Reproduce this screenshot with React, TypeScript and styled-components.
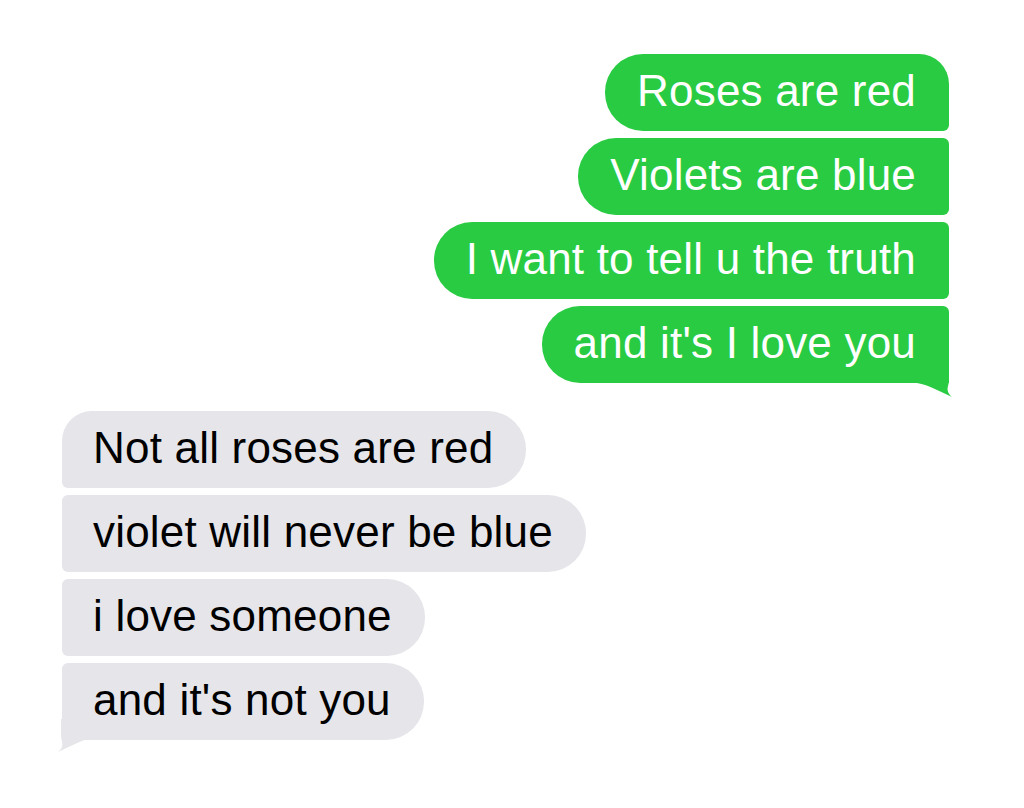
import styled, { createGlobalStyle, css } from 'styled-components'

const GlobalStyle = createGlobalStyle`
  html, body {
    margin: 0;
    padding: 0;
    background: #ffffff;
  }
  body {
    font-family: "Liberation Sans", Arial, Helvetica, sans-serif;
  }
`

type Side = 'sent' | 'received'
type Pos = 'first' | 'middle' | 'last'

const GREEN = '#29cb42'
const GRAY = '#e5e5ea'

const Page = styled.main`
  width: 1024px;
  min-height: 808px;
  box-sizing: border-box;
  padding-top: 54px;
  display: flex;
  flex-direction: column;
`

const Group = styled.div<{ $side: Side }>`
  display: flex;
  flex-direction: column;
  gap: 7px;
  ${({ $side }) =>
    $side === 'sent'
      ? css`
          align-items: flex-end;
          padding-right: 75px;
        `
      : css`
          align-items: flex-start;
          padding-left: 62px;
          margin-top: 28px;
        `}
`

// radii are [top-left, top-right, bottom-right, bottom-left]
const radii = (side: Side, pos: Pos) => {
  const big = 38
  const tail = pos === 'first' ? [30, 6] : pos === 'middle' ? [6, 6] : [6, 0]
  return side === 'sent'
    ? `${big}px ${tail[0]}px ${tail[1]}px ${big}px`
    : `${tail[0]}px ${big}px ${big}px ${tail[1]}px`
}

const Bubble = styled.div<{ $side: Side; $pos: Pos }>`
  position: relative;
  box-sizing: border-box;
  height: 77px;
  padding: 1px 33px 4px ${({ $side }) => ($side === 'sent' ? 32 : 31)}px;
  font-size: 44px;
  line-height: 72px;
  letter-spacing: 0.2px;
  white-space: nowrap;
  border-radius: ${({ $side, $pos }) => radii($side, $pos)};
  background: ${({ $side }) => ($side === 'sent' ? GREEN : GRAY)};
  color: ${({ $side }) => ($side === 'sent' ? '#ffffff' : '#000000')};
`

const TailSvg = styled.svg<{ $side: Side }>`
  position: absolute;
  width: 40px;
  height: 40px;
  ${({ $side }) =>
    $side === 'sent'
      ? css`
          bottom: -15px;
          right: -4px;
        `
      : css`
          bottom: -13px;
          left: -5px;
          transform: scaleX(-1);
        `}
`

// the bubble corner sits at (36, 25) in the tail's own box
function Tail({ side }: { side: Side }) {
  return (
    <TailSvg $side={side} viewBox="0 0 40 40">
      <path
        d="M0 20 L0 25 L4 25 C16 27 28 34 39 39 C37 37.5 35 35 34.6 32 C34.3 29 36 27 36 20 L36 6 L0 6 Z"
        fill={side === 'sent' ? GREEN : GRAY}
      />
    </TailSvg>
  )
}

const sent = ['Roses are red', 'Violets are blue', 'I want to tell u the truth', "and it's I love you"]
const received = ['Not all roses are red', 'violet will never be blue', 'i love someone', "and it's not you"]

const posOf = (i: number, n: number): Pos => (i === 0 ? 'first' : i === n - 1 ? 'last' : 'middle')

function Messages({ side, lines }: { side: Side; lines: string[] }) {
  return (
    <Group $side={side}>
      {lines.map((text, i) => {
        const pos = posOf(i, lines.length)
        return (
          <Bubble key={text} $side={side} $pos={pos}>
            {text}
            {pos === 'last' && <Tail side={side} />}
          </Bubble>
        )
      })}
    </Group>
  )
}

export default function App() {
  return (
    <>
      <GlobalStyle />
      <Page>
        <Messages side="sent" lines={sent} />
        <Messages side="received" lines={received} />
      </Page>
    </>
  )
}
